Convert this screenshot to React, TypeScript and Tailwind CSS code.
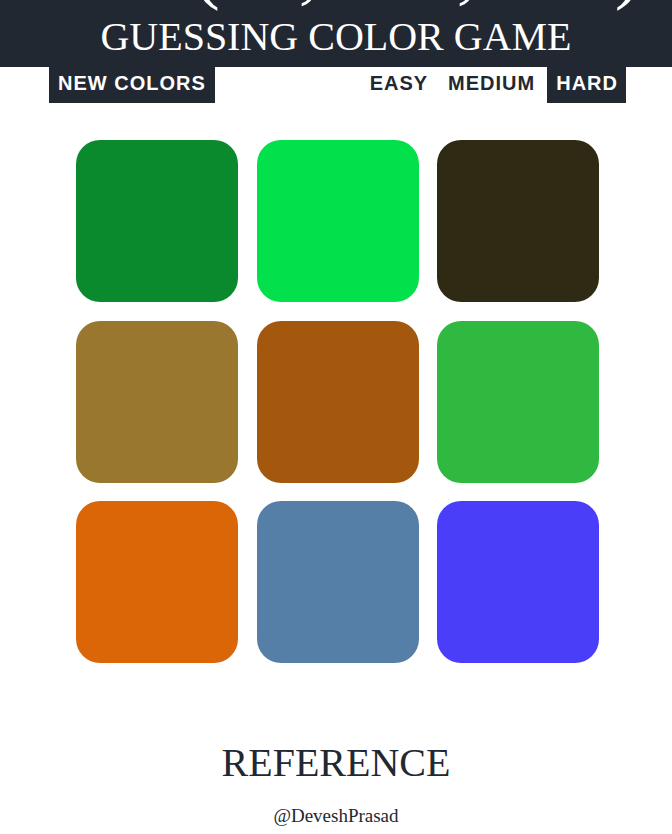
import React from "react";

const colors = [
  "#0b8a2d",
  "#02e04b",
  "#2f2a14",
  "#9a772f",
  "#a4580d",
  "#2fb940",
  "#db6608",
  "#567fa8",
  "#4a3ef8",
];

export default function App() {
  return (
    <div className="min-h-[834px] bg-white">
      <div className="h-[67px] overflow-hidden bg-[#222831] text-white flex flex-col items-center font-['Liberation_Serif',serif]">
        <div className="text-[79px] leading-none mt-[-72px] whitespace-nowrap">RGB(86, 127, 168)</div>
        <div className="text-[40px] leading-none mt-[9.5px] whitespace-nowrap">GUESSING COLOR GAME</div>
      </div>
      <div className="flex justify-between pl-[49px] pr-[46px] font-['Liberation_Sans',Arial,sans-serif] font-bold text-[20px] tracking-[1px] uppercase">
        <button className="h-9 px-[9px] leading-[32px] pb-1 bg-[#222831] text-white">NEW COLORS</button>
        <div className="flex gap-[3px]">
          <button className="h-9 px-[8px] leading-[32px] pb-1 text-[#222831]">EASY</button>
          <button className="h-9 px-[9px] leading-[32px] pb-1 text-[#222831]">MEDIUM</button>
          <button className="h-9 pl-[9px] pr-[8px] leading-[32px] pb-1 bg-[#222831] text-white">HARD</button>
        </div>
      </div>
      <div className="mt-[37px] ml-[76px] w-[523px] grid grid-cols-[162px_162px_162px] gap-x-[18.5px] gap-y-[18.5px]">
        {colors.map((c, i) => (
          <div key={i} className="h-[162px] rounded-[24px]" style={{ backgroundColor: c }} />
        ))}
      </div>
      <div className="mt-[80px] text-center text-[40px] leading-none text-[#222831] font-['Liberation_Serif',serif]">REFERENCE</div>
      <div className="mt-[23px] text-center text-[19px] leading-none text-[#222831] font-['Liberation_Serif',serif]">@DeveshPrasad</div>
    </div>
  );
}
